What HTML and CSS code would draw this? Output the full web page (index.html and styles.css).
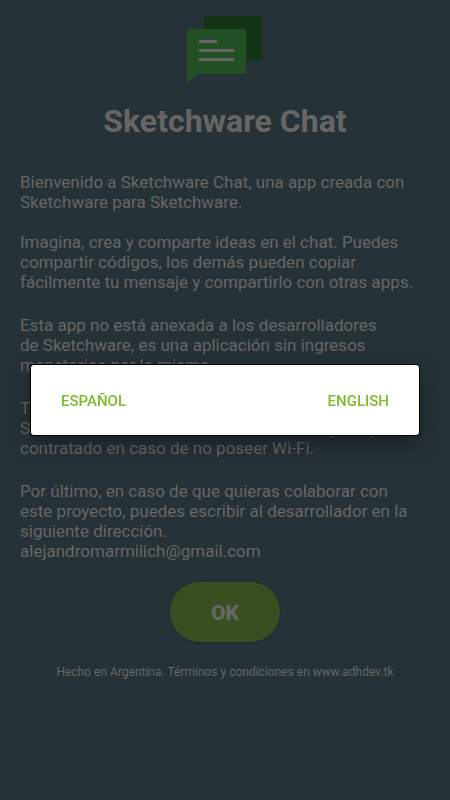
FILE: index.html
```html
<!DOCTYPE html>
<html lang="es">
<head>
<meta charset="utf-8">
<meta name="viewport" content="width=device-width, initial-scale=1">
<title>Sketchware Chat</title>
<link rel="stylesheet" href="styles.css">
</head>
<body>
<main class="welcome">
  <svg class="logo" viewBox="0 0 76 70" aria-hidden="true">
    <rect class="logo-back" x="17" y="1" width="58" height="45" rx="1"/>
    <path class="logo-front" d="M1 14H58Q59 14 59 15V58Q59 59 58 59H11L0 69V15Q0 14 1 14Z"/>
    <path class="logo-lines" d="M13 26.500H29M13 35.500H46M13 44.500H46"/>
  </svg>
  <h1 class="title">Sketchware Chat</h1>
  <div class="copy">
    <p>Bienvenido a Sketchware Chat, una app creada con Sketchware para Sketchware.</p>
    <p>Imagina, crea y comparte ideas en el chat. Puedes compartir códigos, los demás pueden copiar fácilmente tu mensaje y compartirlo con otras apps.</p>
    <p>Esta app no está anexada a los desarrolladores<br>de Sketchware, es una aplicación sin ingresos monetarios por la misma.</p>
    <p>Todos los usuarios de la app, al igual que en<br>Sketchware, consumen datos de internet y del plan<br>contratado en caso de no poseer Wi-Fi.</p>
    <p>Por último, en caso de que quieras colaborar con<br>este proyecto, puedes escribir al desarrollador en la siguiente dirección.<br>alejandromarmilich@gmail.com</p>
  </div>
  <button class="ok" type="button">OK</button>
  <p class="footer">Hecho en Argentina. Términos y condiciones en www.adhdev.tk</p>
</main>
<div class="overlay">
  <div class="dialog" role="dialog" aria-modal="true" aria-label="Idioma">
    <button class="choice" type="button">ESPAÑOL</button>
    <button class="choice" type="button">ENGLISH</button>
  </div>
</div>
</body>
</html>
```
FILE: styles.css
```css
* {
  box-sizing: border-box;
}

body {
  margin: 0;
  background: #273238;
  color: #666666;
  font-family: Roboto, "Liberation Sans", sans-serif;
}

.welcome {
  display: flex;
  flex-direction: column;
  align-items: center;
  min-height: 100vh;
  padding: 15px 20px;
}

.logo {
  width: 76px;
  height: 70px;
}

.logo-back {
  fill: #133516;
}

.logo-front {
  fill: #205023;
}

.logo-lines {
  fill: none;
  stroke: #666666;
  stroke-width: 3;
  stroke-linecap: round;
}

.title {
  margin: 16px 0 0;
  font-size: 32px;
  line-height: 40px;
  font-weight: 700;
}

.copy {
  width: 100%;
  margin-top: 31px;
  font-size: 17px;
  line-height: 20px;
}

.copy p {
  margin: 0 0 23px;
}

.copy p:first-child {
  margin-bottom: 20px;
}

.copy p:last-child {
  margin-bottom: 0;
}

.ok {
  width: 110px;
  height: 60px;
  margin-top: 21px;
  padding: 2px 0 0;
  border: 0;
  border-radius: 30px;
  background: #394f20;
  box-shadow: 0 1px 3px rgba(0, 0, 0, 0.2);
  color: #666666;
  font: 900 21px Roboto, "Liberation Sans", sans-serif;
}

.footer {
  margin: 22px 0 0;
  font-size: 12px;
  line-height: 16px;
  text-align: center;
}

.overlay {
  position: fixed;
  inset: 0;
  display: flex;
  align-items: center;
  padding: 0 31px;
}

.dialog {
  display: flex;
  justify-content: space-between;
  align-items: center;
  width: 100%;
  padding: 15px 22px;
  border-radius: 3px;
  background: #ffffff;
  box-shadow: 0 0 0 1px #000000, 0 8px 24px rgba(0, 0, 0, 0.4);
}

.choice {
  height: 40px;
  padding: 2px 8px 0;
  border: 0;
  background: none;
  color: #7cbd2f;
  font: 500 15px Roboto, "Liberation Sans", sans-serif;
}
```
